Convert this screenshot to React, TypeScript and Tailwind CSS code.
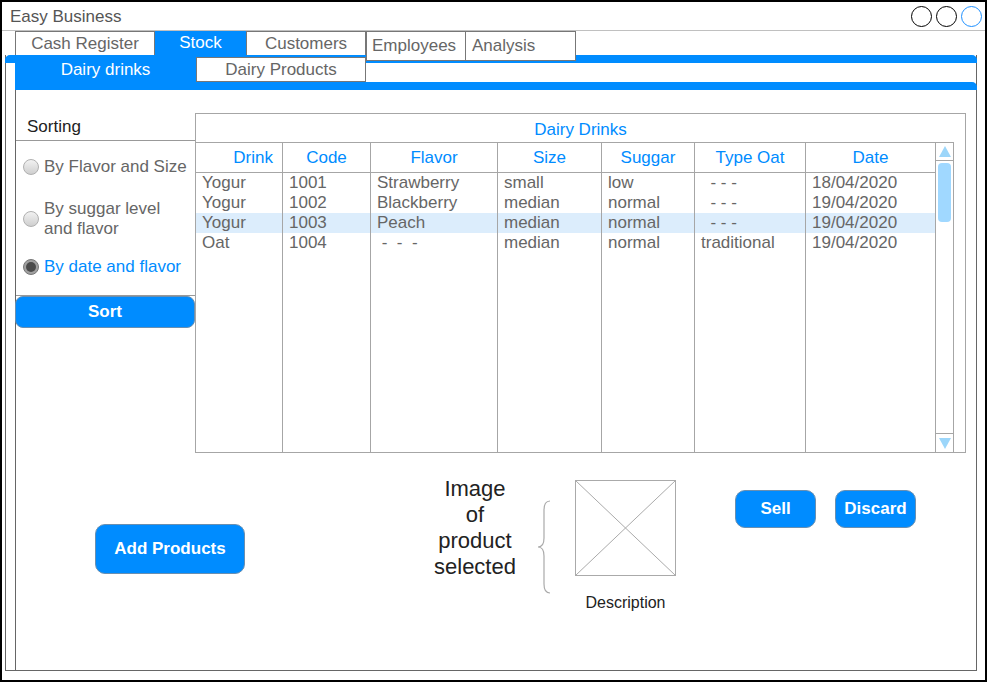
// App.tsx
import React from "react";

interface DrinkRow {
  drink: string;
  code: string;
  flavor: string;
  size: string;
  sugar: string;
  typeOat: string;
  date: string;
  selected?: boolean;
}

const rows: DrinkRow[] = [
  { drink: "Yogur", code: "1001", flavor: "Strawberry", size: "small", sugar: "low", typeOat: "\u00a0\u00a0- - -", date: "18/04/2020" },
  { drink: "Yogur", code: "1002", flavor: "Blackberry", size: "median", sugar: "normal", typeOat: "\u00a0\u00a0- - -", date: "19/04/2020" },
  { drink: "Yogur", code: "1003", flavor: "Peach", size: "median", sugar: "normal", typeOat: "\u00a0\u00a0- - -", date: "19/04/2020", selected: true },
  { drink: "Oat", code: "1004", flavor: "\u00a0-\u00a0\u00a0-\u00a0\u00a0-", size: "median", sugar: "normal", typeOat: "traditional", date: "19/04/2020" },
];

const headers = ["Drink", "Code", "Flavor", "Size", "Suggar", "Type Oat", "Date"];

const BLUE = "bg-[#008cff]";

const Radio: React.FC<{ checked?: boolean }> = ({ checked }) =>
  checked ? (
    <span className="w-[16px] h-[16px] shrink-0 rounded-full border border-[#777] bg-[#a0a0a0] flex items-center justify-center">
      <span className="w-[10px] h-[10px] rounded-full bg-[#4a4a4a]" />
    </span>
  ) : (
    <span className="w-[16px] h-[16px] shrink-0 rounded-full border border-[#b0b0b0] bg-linear-to-b from-[#f2f2f2] to-[#cfcfcf]" />
  );

const Triangle: React.FC<{ down?: boolean }> = ({ down }) => (
  <svg width="12" height="11" viewBox="0 0 12 11">
    <polygon points={down ? "0,0 12,0 6,11" : "6,0 12,11 0,11"} fill="#9cd6fa" />
  </svg>
);

const App: React.FC = () => {
  return (
    <div className="w-[987px] h-[682px] border-2 border-black bg-white flex flex-col text-[17px] text-[#666] font-['Liberation_Sans',Arial,sans-serif] overflow-hidden">
      {/* Window title bar */}
      <div className="h-[29px] shrink-0 border-b border-[#c0c0c0] flex items-center justify-between pl-2 pr-[3px]">
        <span className="text-[#555] pt-[2px]">Easy Business</span>
        <div className="flex gap-[4px]">
          <span className="w-[21px] h-[21px] rounded-full border border-black" />
          <span className="w-[21px] h-[21px] rounded-full border border-black" />
          <span className="w-[21px] h-[21px] rounded-full border border-[#1e90ff]" />
        </div>
      </div>

      {/* Main tabs */}
      <div className="h-[24px] shrink-0 flex items-start pl-[13px]">
        <div className="w-[140px] h-[24px] border-x border-t border-[#777] flex items-center justify-center">Cash Register</div>
        <div className={`w-[91px] h-[24px] ${BLUE} text-white flex items-center justify-center`}>Stock</div>
        <div className="w-[120px] h-[24px] border-x border-t border-[#777] flex items-center justify-center">Customers</div>
        <div className="relative z-10 w-[100px] h-[30px] border border-[#777] bg-white flex items-center pl-[5px]">Employees</div>
        <div className="relative z-10 w-[110px] h-[30px] border border-l-0 border-[#777] bg-white flex items-center pl-[6px]">Analysis</div>
      </div>

      {/* Stock panel */}
      <div className="flex-1 mb-[9px] ml-[3px] w-[972px] border-x border-b border-[#666] flex flex-col">
        <div className={`h-[8px] -mx-px ${BLUE} rounded-t-[5px] shrink-0`} />
        <div className="relative z-10 -mt-[6px] ml-[9px] h-[25px] flex shrink-0">
          <div className={`w-[181px] h-[25px] ${BLUE} text-white flex items-center justify-center`}>Dairy drinks</div>
          <div className="w-[170px] h-[25px] border border-[#777] bg-white flex items-center justify-center">Dairy Products</div>
        </div>
        <div className={`h-[8px] ml-[9px] -mr-px ${BLUE} rounded-tr-[5px] shrink-0`} />

        {/* Dairy drinks content */}
        <div className="flex-1 ml-[9px] border-l border-[#666] pt-[23px] flex flex-col">
          <div className="flex items-start">
            {/* Sorting panel */}
            <div className="w-[179px] flex flex-col">
              <div className="h-[28px] border-b border-[#999] pl-[11px] flex items-center text-[#222]">Sorting</div>
              <div className="h-[155px] border-b border-[#999] pl-[7px] flex flex-col">
                <label className="mt-[16px] flex items-center gap-[5px] leading-[20px]">
                  <Radio />
                  <span>By Flavor and Size</span>
                </label>
                <label className="mt-[22px] flex items-center gap-[5px] leading-[20px]">
                  <Radio />
                  <span>
                    By suggar level
                    <br />
                    and flavor
                  </span>
                </label>
                <label className="mt-[18px] flex items-center gap-[5px] leading-[20px] text-[#008cff]">
                  <Radio checked />
                  <span>By date and flavor</span>
                </label>
              </div>
              <button className={`-ml-px w-[180px] h-[32px] ${BLUE} border border-[#6a8fb0] rounded-[8px] text-white font-bold`}>
                Sort
              </button>
            </div>

            {/* Dairy drinks table */}
            <div className="w-[771px] h-[340px] border border-[#a6a6a6] flex flex-col">
              <div className="h-[28px] shrink-0 flex items-center justify-center pt-[3px] text-[#008cff]">Dairy Drinks</div>
              <div className="flex-1 flex">
                <div className="w-[758px] border-t border-r border-[#a6a6a6] flex">
                  <div className="grid grid-cols-[87px_88px_127px_104px_93px_111px_130px] grid-rows-[30px_20px_20px_20px_20px_1fr] w-[740px]">
                    {headers.map((h) => (
                      <div
                        key={h}
                        className={`border-r border-b border-[#a6a6a6] flex items-center text-[#008cff] ${
                          h === "Drink" ? "justify-end pr-[9px]" : "justify-center"
                        }`}
                      >
                        {h}
                      </div>
                    ))}
                    {rows.map((r) =>
                      [r.drink, r.code, r.flavor, r.size, r.sugar, r.typeOat, r.date].map((v, i) => (
                        <div
                          key={r.code + i}
                          className={`border-r border-[#a6a6a6] pl-[6px] leading-[20px] whitespace-pre ${
                            r.selected ? "bg-[#dcedfc]" : ""
                          }`}
                        >
                          {v}
                        </div>
                      ))
                    )}
                    {headers.map((h) => (
                      <div key={"f" + h} className="border-r border-[#a6a6a6]" />
                    ))}
                  </div>
                  {/* Scrollbar */}
                  <div className="w-[18px] flex flex-col">
                    <div className="h-[18px] border-b border-[#a6a6a6] flex items-center justify-center">
                      <Triangle />
                    </div>
                    <div className="mt-[2px] mx-[2px] h-[59px] rounded-[4px] bg-[#a0d8ff]" />
                    <div className="flex-1" />
                    <div className="h-[19px] border-t border-[#a6a6a6] flex items-center justify-center">
                      <Triangle down />
                    </div>
                  </div>
                </div>
              </div>
            </div>
          </div>

          {/* Lower actions */}
          <div className="flex items-start">
            <button className={`ml-[79px] mt-[71px] w-[150px] h-[50px] ${BLUE} border border-[#6a8fb0] rounded-[10px] text-white font-bold`}>
              Add Products
            </button>
            <div className="ml-[180px] mt-[23px] w-[100px] text-center text-[22px] leading-[26px] text-[#222]">
              Image
              <br />
              of
              <br />
              product
              <br />
              selected
            </div>
            <svg className="ml-[12px] mt-[47px]" width="14" height="94" viewBox="0 0 14 94">
              <path
                d="M13 1 Q7 1 7 10 L7 38 Q7 47 1 47 Q7 47 7 56 L7 84 Q7 93 13 93"
                fill="none"
                stroke="#aaa"
                strokeWidth="1.2"
              />
            </svg>
            <div className="ml-[24px] mt-[27px] w-[101px] flex flex-col items-center">
              <svg width="101" height="96" viewBox="0 0 101 96">
                <rect x="0.5" y="0.5" width="100" height="95" fill="white" stroke="#aaa" />
                <line x1="0.5" y1="0.5" x2="100.5" y2="95.5" stroke="#aaa" />
                <line x1="100.5" y1="0.5" x2="0.5" y2="95.5" stroke="#aaa" />
              </svg>
              <span className="mt-[17px] text-[16px] leading-[20px] text-[#222]">Description</span>
            </div>
            <button className={`ml-[59px] mt-[37px] w-[81px] h-[38px] ${BLUE} border border-[#6a8fb0] rounded-[10px] text-white font-bold`}>
              Sell
            </button>
            <button className={`ml-[19px] mt-[37px] w-[81px] h-[38px] ${BLUE} border border-[#6a8fb0] rounded-[10px] text-white font-bold`}>
              Discard
            </button>
          </div>
        </div>
      </div>
    </div>
  );
};

export default App;
